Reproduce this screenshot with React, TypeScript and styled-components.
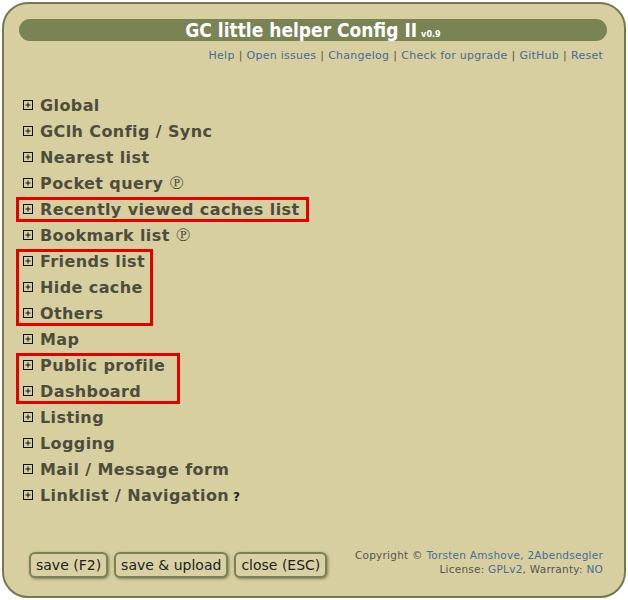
import React from "react";
import styled, { createGlobalStyle } from "styled-components";

const Global = createGlobalStyle`
  html, body { margin: 0; padding: 0; background: #ffffff; }
  body { font-family: "DejaVu Sans", Verdana, sans-serif; }
  * { box-sizing: border-box; }
`;

const Panel = styled.div`
  margin: 2px;
  height: 596px;
  border: 2px solid #737a52;
  border-radius: 26px;
  background: #d8cfa0;
  padding: 15px 17px 18px 15px;
  display: flex;
  flex-direction: column;
`;

const TitleBar = styled.div`
  height: 22px;
  border-radius: 11px;
  background: #798354;
  color: #ffffff;
  text-align: center;
  font-family: "DejaVu Sans Condensed", "DejaVu Sans", sans-serif;
  font-weight: bold;
  font-size: 19px;
  line-height: 22px;
`;

const Version = styled.span`
  font-size: 9px;
  margin-left: 4px;
`;

const Links = styled.div`
  margin-top: 8px;
  padding-right: 4px;
  text-align: right;
  font-size: 11px;
  letter-spacing: 0.25px;
  line-height: 14px;
  color: #555;
`;

const Link = styled.a`
  color: #4a6a94;
  text-decoration: none;
`;

const Sep = styled.span`
  color: #555;
  margin: 0 4px;
`;

const List = styled.div`
  margin-top: 29px;
  padding-left: 4px;
  display: flex;
  flex-direction: column;
  align-items: flex-start;
`;

const Row = styled.div`
  height: 26px;
  display: flex;
  align-items: center;
  gap: 7px;
  font-size: 16px;
  letter-spacing: 0.4px;
  font-weight: bold;
  color: #4e4c3c;
  white-space: nowrap;
`;

const Group = styled.div<{ $padRight: number }>`
  position: relative;
  display: flex;
  flex-direction: column;
  &::after {
    content: "";
    position: absolute;
    top: 1px;
    bottom: 0;
    left: -7px;
    right: ${(p) => -p.$padRight}px;
    border: 3px solid #e50000;
    pointer-events: none;
  }
`;

const Premium = styled.span`
  font-family: "DejaVu Serif", "Liberation Serif", serif;
  font-weight: normal;
  font-size: 19px;
  line-height: 1;
  margin-left: 6px;
  color: #4e4c3c;
`;

const Help = styled.span`
  font-size: 12px;
  margin-left: 4px;
  color: #222;
`;

const Footer = styled.div`
  margin-top: auto;
  padding-left: 10px;
  padding-right: 4px;
  display: flex;
  justify-content: space-between;
  align-items: flex-end;
`;

const Buttons = styled.div`
  display: flex;
  gap: 6px;
`;

const Button = styled.button`
  height: 26px;
  padding: 0 5px;
  border: 2px solid #7a8157;
  border-radius: 6px;
  background: #d9d1a3;
  box-shadow: 1px 1px 3px rgba(60, 60, 30, 0.55);
  font-family: "DejaVu Sans", Verdana, sans-serif;
  font-size: 14px;
  color: #222;
  cursor: pointer;
`;

const Copy = styled.div`
  text-align: right;
  font-size: 10.5px;
  letter-spacing: 0.25px;
  line-height: 14px;
  color: #555;
  padding-bottom: 2px;
`;

const PlusIcon = () => (
  <svg width="10" height="10" viewBox="0 0 10 10">
    <rect x="0.5" y="0.5" width="9" height="9" fill="none" stroke="#111" strokeWidth="1" />
    <path d="M5 2.5v5M2.5 5h5" stroke="#111" strokeWidth="1" />
  </svg>
);

const Item = ({ label, premium, help }: { label: string; premium?: boolean; help?: boolean }) => (
  <Row>
    <PlusIcon />
    <span>
      {label}
      {premium && <Premium>℗</Premium>}
      {help && <Help>?</Help>}
    </span>
  </Row>
);

const topLinks = ["Help", "Open issues", "Changelog", "Check for upgrade", "GitHub", "Reset"];

export default function App() {
  return (
    <>
      <Global />
      <Panel>
        <TitleBar>
          GC little helper Config II<Version>v0.9</Version>
        </TitleBar>
        <Links>
          {topLinks.map((l, i) => (
            <React.Fragment key={l}>
              {i > 0 && <Sep>|</Sep>}
              <Link href="#">{l}</Link>
            </React.Fragment>
          ))}
        </Links>
        <List>
          <Item label="Global" />
          <Item label="GClh Config / Sync" />
          <Item label="Nearest list" />
          <Item label="Pocket query" premium />
          <Group $padRight={9}>
            <Item label="Recently viewed caches list" />
          </Group>
          <Item label="Bookmark list" premium />
          <Group $padRight={8}>
            <Item label="Friends list" />
            <Item label="Hide cache" />
            <Item label="Others" />
          </Group>
          <Item label="Map" />
          <Group $padRight={15}>
            <Item label="Public profile" />
            <Item label="Dashboard" />
          </Group>
          <Item label="Listing" />
          <Item label="Logging" />
          <Item label="Mail / Message form" />
          <Item label="Linklist / Navigation" help />
        </List>
        <Footer>
          <Buttons>
            <Button>save (F2)</Button>
            <Button>save &amp; upload</Button>
            <Button>close (ESC)</Button>
          </Buttons>
          <Copy>
            <div>
              Copyright © <Link href="#">Torsten Amshove</Link>, <Link href="#">2Abendsegler</Link>
            </div>
            <div>
              License: <Link href="#">GPLv2</Link>, Warranty: <Link href="#">NO</Link>
            </div>
          </Copy>
        </Footer>
      </Panel>
    </>
  );
}
